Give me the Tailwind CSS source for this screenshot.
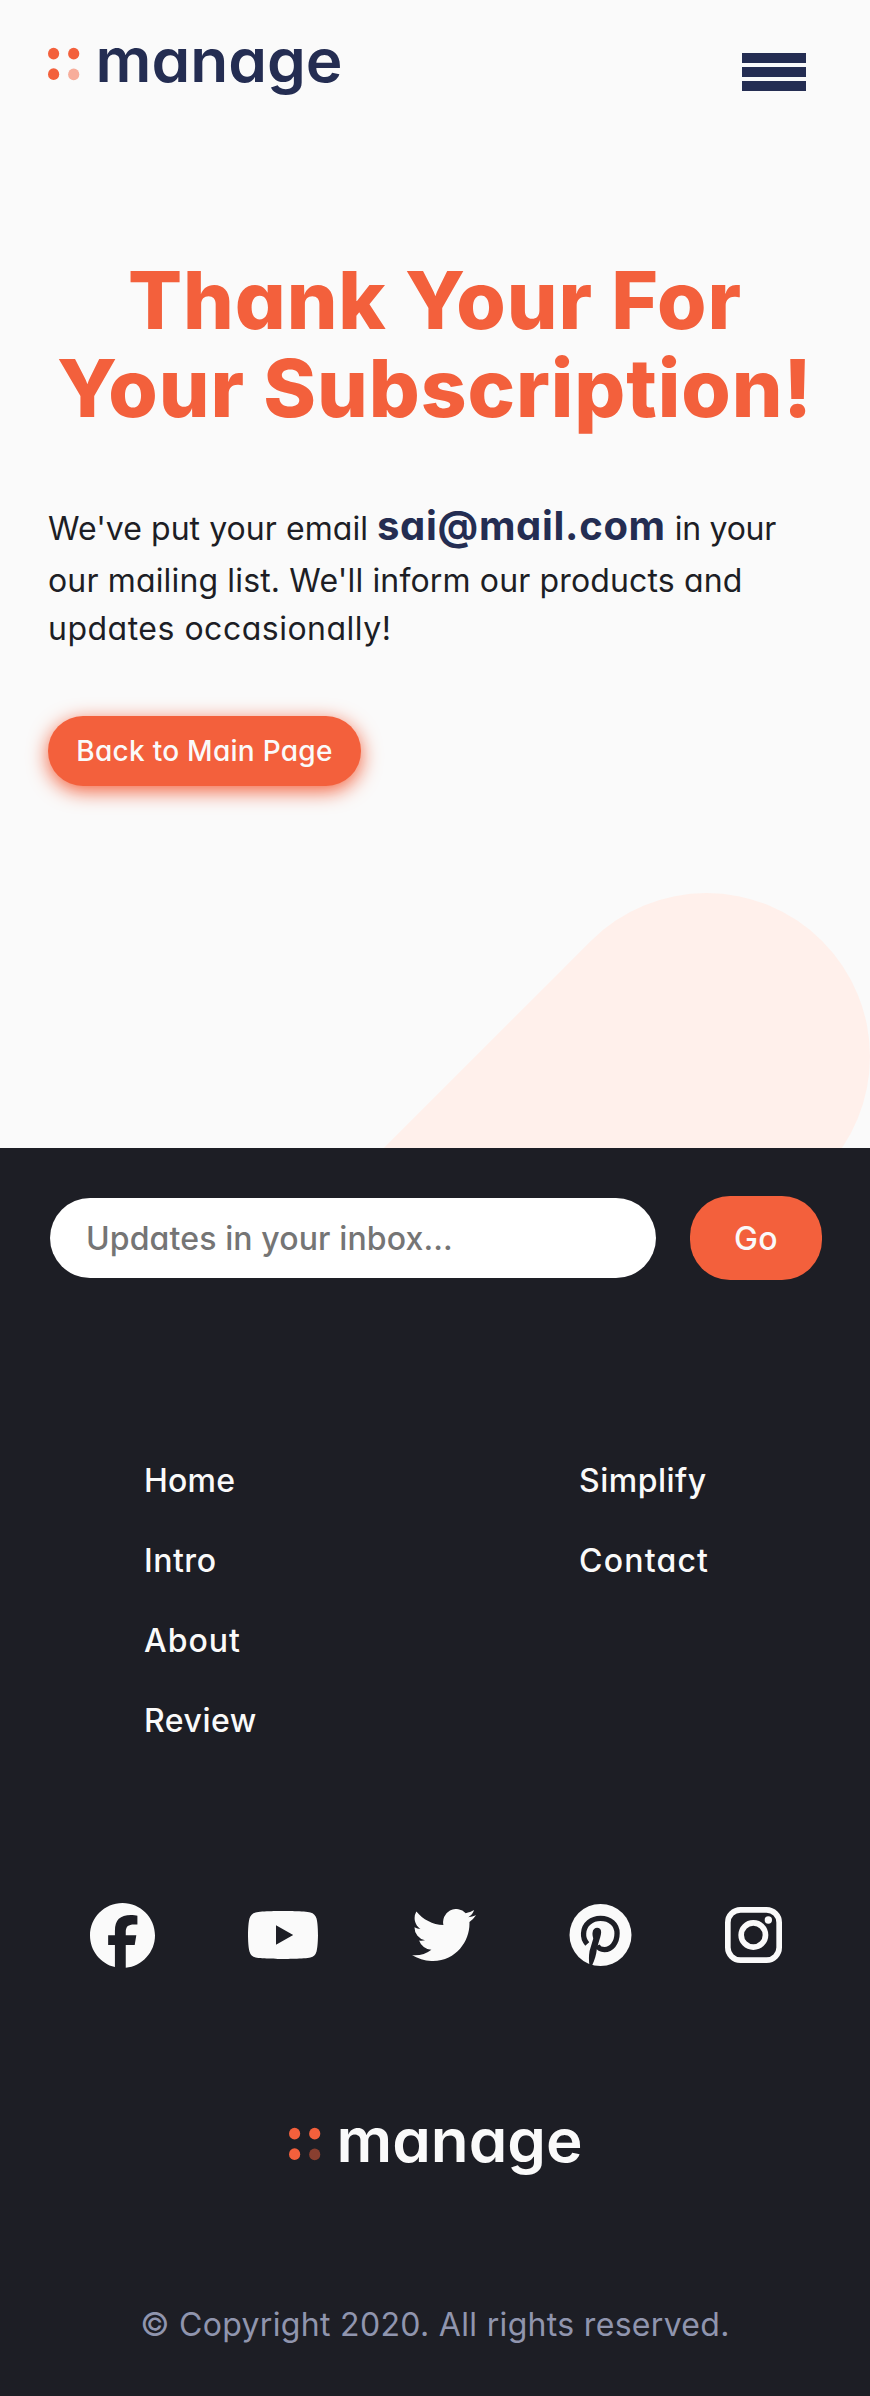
<!DOCTYPE html>
<html lang="en">
<head>
<meta charset="utf-8">
<title>Manage</title>
<script src="https://cdn.jsdelivr.net/npm/@tailwindcss/browser@4"></script>
</head>
<body class="w-[870px] bg-[#fafafa] font-['Inter',sans-serif] [font-feature-settings:'cv11'] text-[32px] leading-[48px] text-[#1d1e25]">
<main class="relative h-[1148px] overflow-hidden px-12">
  <div class="absolute left-[217px] top-[893px] h-[327px] w-[653px]">
    <svg width="653" height="327" viewBox="0 0 653 327" class="overflow-visible"><path d="M489.500 163.500L226 427" stroke="#fff0eb" stroke-width="327" stroke-linecap="round"/></svg>
  </div>
  <header class="relative flex h-[256px] items-start justify-between pt-[45px]">
    <svg width="294" height="56" viewBox="0 0 294 56" class="overflow-visible" role="img" aria-label="manage">
      <g fill="#f3603c"><ellipse cx="5.600" cy="8.700" rx="5.600" ry="5.900"/><ellipse cx="25.700" cy="8.700" rx="5.600" ry="5.900"/><ellipse cx="5.600" cy="29.200" rx="5.600" ry="5.900"/><ellipse cx="25.700" cy="29.400" rx="5.600" ry="5.900" opacity=".5"/></g>
      <text x="47.500" y="36.800" font-size="60" font-weight="600" fill="#242d52" textLength="247" lengthAdjust="spacingAndGlyphs">manage</text>
    </svg>
    <button class="mr-4 mt-2 flex w-16 flex-col gap-1" aria-label="Menu">
      <span class="h-2.5 w-full bg-[#242d52]"></span><span class="h-2.5 w-full bg-[#242d52]"></span><span class="h-2.5 w-full bg-[#242d52]"></span>
    </button>
  </header>
  <section class="relative">
    <h1 class="-mx-4 whitespace-nowrap text-center text-[80px] font-extrabold leading-[88px] tracking-[0.9px] text-[#f3603c]">Thank Your For<br>Your Subscription!</h1>
    <p class="mt-[63px] whitespace-nowrap"><span class="tracking-[0.05px]">We've put your email</span> <span class="text-[40px] font-bold leading-[62px] tracking-[0.7px] text-[#242d52]">sai@mail.com</span> <span class="tracking-[-0.3px]">in your</span><br><span class="tracking-[0.15px]">our mailing list. We'll inform our products and</span><br><span class="tracking-[0.5px]">updates occasionally!</span></p>
    <a class="mt-[63px] flex h-[70px] w-[313px] items-center justify-center rounded-full bg-[#f3603c] text-[28px] font-medium tracking-[0.27px] text-[#fafafa] shadow-[0_5px_20px_#f3603c]">Back to Main Page</a>
  </section>
</main>
<footer class="h-[1248px] bg-[#1d1e25] px-12 pt-12 font-medium text-[#fafafa]">
  <form class="ml-0.5 flex items-center gap-[34px]">
    <div class="flex h-20 w-[606px] items-center rounded-[40px] bg-white pl-9 pt-0.5 tracking-[0.12px] text-[#757575]">Updates in your inbox...</div>
    <button class="h-[84px] w-[132px] rounded-[40px] bg-[#f3603c] pt-0.5 tracking-[0.5px]">Go</button>
  </form>
  <nav class="mt-[177px] grid h-[287px] grid-cols-[435px_1fr] pl-24">
    <ul class="flex flex-col gap-8"><li class="tracking-[0.2px]">Home</li><li class="tracking-[0.5px]">Intro</li><li class="tracking-[1px]">About</li><li class="tracking-[0.5px]">Review</li></ul>
    <ul class="flex flex-col gap-8"><li class="tracking-[0.5px]">Simplify</li><li class="tracking-[1.2px]">Contact</li></ul>
  </nav>
  <div class="mt-[155px] flex h-[72px] items-center justify-between pl-[42px] pr-[40px]">
    <svg width="65" height="65" viewBox="0 0 24 24" fill="#fafafa"><path d="M24 12C24 5.370 18.630 0 12 0S0 5.370 0 12c0 5.650 3.900 10.390 9.200 11.670V15.500H6.700v-3.600h2.500V10.300c0-4.100 1.900-5.900 5.900-5.900.8 0 2 .1 2.400.3v3.200h-1.300c-1.900 0-3 .7-3 2.700v1.300h3.900l-.6 3.600h-3.300V23.940C19.200 23.300 24 18.200 24 12z"/></svg>
    <svg width="70" height="48" viewBox="0 3.545 24 16.910" preserveAspectRatio="none" fill="#fafafa"><path fill-rule="evenodd" d="M23.498 6.186a3.016 3.016 0 0 0-2.122-2.136C19.505 3.545 12 3.545 12 3.545s-7.505 0-9.377.505A3.017 3.017 0 0 0 .502 6.186C0 8.070 0 12 0 12s0 3.930.502 5.814a3.016 3.016 0 0 0 2.122 2.136c1.871.505 9.376.505 9.376.505s7.505 0 9.377-.505a3.015 3.015 0 0 0 2.122-2.136C24 15.930 24 12 24 12s0-3.930-.502-5.814zM9.600 8.600v6.800L15.500 12z"/></svg>
    <svg width="64" height="52" viewBox="0 2.250 24 19.500" fill="#fafafa"><path d="M23.953 4.570a10 10 0 01-2.825.775 4.958 4.958 0 002.163-2.723c-.951.555-2.005.959-3.127 1.184a4.920 4.920 0 00-8.384 4.482C7.690 8.095 4.067 6.130 1.640 3.162a4.822 4.822 0 00-.666 2.475c0 1.710.870 3.213 2.188 4.096a4.904 4.904 0 01-2.228-.616v.06a4.923 4.923 0 003.946 4.827 4.996 4.996 0 01-2.212.085 4.936 4.936 0 004.604 3.417 9.867 9.867 0 01-6.102 2.105c-.39 0-.779-.023-1.170-.067a13.995 13.995 0 007.557 2.209c9.053 0 13.998-7.496 13.998-13.985 0-.21 0-.42-.015-.63A9.935 9.935 0 0024 4.590z"/></svg>
    <svg width="63" height="62" viewBox="325.500 71.500 189 187"><circle cx="420" cy="165" r="93.500" fill="#fafafa"/><path d="M380 192C371 182 368 172 369 160C370 132 394 115 420 115C449 115 470 133 470 160C470 190 452 209 432 209C420 209 413 203 410 197" fill="none" stroke="#1d1e25" stroke-width="16"/><path d="M422 156C422 139 397 139 396 158C395 167 398 172 398 176L387 213C384 230 385 245 387 260L393 260C403 240 407 225 409 207L413 192C417 178 422 166 422 156Z" fill="#1d1e25"/></svg>
    <svg width="57" height="56" viewBox="792 81 171 168" fill="none" stroke="#fafafa" stroke-width="17"><rect x="800.500" y="89.500" width="154" height="151" rx="38"/><circle cx="877" cy="165" r="36.500"/><circle cx="922" cy="120" r="11" fill="#fafafa" stroke="none"/></svg>
  </div>
  <div class="mt-[154px] flex justify-center">
    <svg width="292" height="56" viewBox="0 0 292 56" class="overflow-visible" role="img" aria-label="manage">
      <g fill="#f3603c"><ellipse cx="5.600" cy="8.700" rx="5.600" ry="5.900"/><ellipse cx="25.700" cy="8.700" rx="5.600" ry="5.900"/><ellipse cx="5.600" cy="29.200" rx="5.600" ry="5.900"/><ellipse cx="25.700" cy="29.400" rx="5.600" ry="5.900" opacity=".5"/></g>
      <text x="47.500" y="36.800" font-size="60" font-weight="600" fill="#fafafa" textLength="246" lengthAdjust="spacingAndGlyphs">manage</text>
    </svg>
  </div>
  <p class="mt-[120px] text-center font-normal tracking-[0.32px] text-[#9095ae]">© Copyright 2020. All rights reserved.</p>
</footer>
</body>
</html>
